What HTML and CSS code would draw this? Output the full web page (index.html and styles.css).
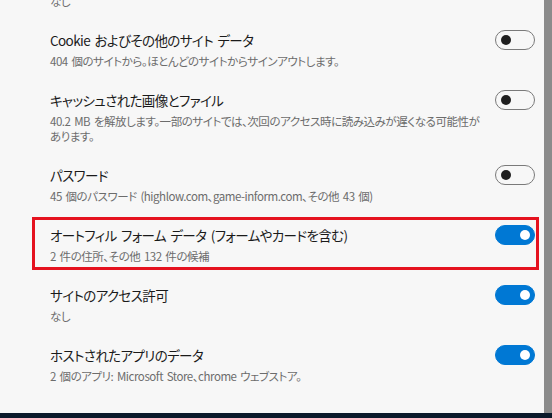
FILE: index.html
```html
<!DOCTYPE html>
<html lang="ja">
<head>
<meta charset="utf-8">
<link rel="stylesheet" href="styles.css">
</head>
<body>
<div class="window">
  <div class="viewport">
    <div class="list">
      <div class="row">
        <div class="text">
          <div class="title">閲覧の履歴</div>
          <div class="sub">なし</div>
        </div>
      </div>
      <div class="row">
        <div class="text">
          <div class="title">Cookie およびその他のサイト データ</div>
          <div class="sub">404 個のサイトから。ほとんどのサイトからサインアウトします。</div>
        </div>
        <span class="toggle"><span class="knob"></span></span>
      </div>
      <div class="row">
        <div class="text">
          <div class="title">キャッシュされた画像とファイル</div>
          <div class="sub">40.2 MB を解放します。一部のサイトでは、次回のアクセス時に読み込みが遅くなる可能性があります。</div>
        </div>
        <span class="toggle"><span class="knob"></span></span>
      </div>
      <div class="row">
        <div class="text">
          <div class="title">パスワード</div>
          <div class="sub">45 個のパスワード (highlow.com、game-inform.com、その他 43 個)</div>
        </div>
        <span class="toggle"><span class="knob"></span></span>
      </div>
      <div class="row highlight">
        <div class="text">
          <div class="title">オートフィル フォーム データ (フォームやカードを含む)</div>
          <div class="sub">2 件の住所、その他 132 件の候補</div>
        </div>
        <span class="toggle on"><span class="knob"></span></span>
      </div>
      <div class="row">
        <div class="text">
          <div class="title">サイトのアクセス許可</div>
          <div class="sub">なし</div>
        </div>
        <span class="toggle on"><span class="knob"></span></span>
      </div>
      <div class="row">
        <div class="text">
          <div class="title">ホストされたアプリのデータ</div>
          <div class="sub">2 個のアプリ: Microsoft Store、chrome ウェブストア。</div>
        </div>
        <span class="toggle on"><span class="knob"></span></span>
      </div>
    </div>
    <div class="scrollbar"></div>
  </div>
  <div class="taskbar"></div>
</div>
</body>
</html>
```

FILE: styles.css
```css
html, body {
  margin: 0;
  padding: 0;
}
body {
  width: 552px;
  height: 418px;
  overflow: hidden;
  background: #f7f7f7;
  font-family: "Noto Sans CJK JP", "Noto Sans", sans-serif;
  font-feature-settings: "palt";
}
.window {
  display: flex;
  flex-direction: column;
  height: 418px;
}
.viewport {
  flex: 1;
  display: flex;
  overflow: hidden;
  min-height: 0;
}
.list {
  flex: 1;
  display: flex;
  flex-direction: column;
  gap: 7px;
  margin-top: -38px;
  padding-left: 32px;
  padding-right: 5px;
}
.row {
  display: flex;
  align-items: flex-start;
  border: 3px solid transparent;
  padding: 5px 1px 3px 15px;
}
.row.highlight {
  border-color: #e5121f;
}
.text {
  flex: 1;
  min-width: 0;
  padding-right: 10px;
}
.title {
  font-size: 13.5px;
  letter-spacing: -0.6px;
  word-spacing: 2px;
  line-height: 20px;
  color: #1a1a1a;
}
.sub {
  margin-top: 4px;
  font-size: 11.5px;
  letter-spacing: -0.45px;
  word-spacing: 1.5px;
  line-height: 15px;
  color: #6c6c6c;
}
.toggle {
  flex: none;
  width: 40px;
  height: 20px;
  box-sizing: border-box;
  border: 1px solid #7a7a7a;
  border-radius: 10px;
  display: flex;
  align-items: center;
  padding: 0 4px 0 5px;
}
.knob {
  width: 10px;
  height: 10px;
  border-radius: 50%;
  background: #1f1f1f;
}
.toggle.on {
  background: #0078d4;
  border-color: #0078d4;
  justify-content: flex-end;
}
.toggle.on .knob {
  background: #ffffff;
}
.scrollbar {
  flex: none;
  width: 8px;
  background: #8b8b8b;
}
.taskbar {
  flex: none;
  height: 5px;
  background: #0b1a2b;
}
```
